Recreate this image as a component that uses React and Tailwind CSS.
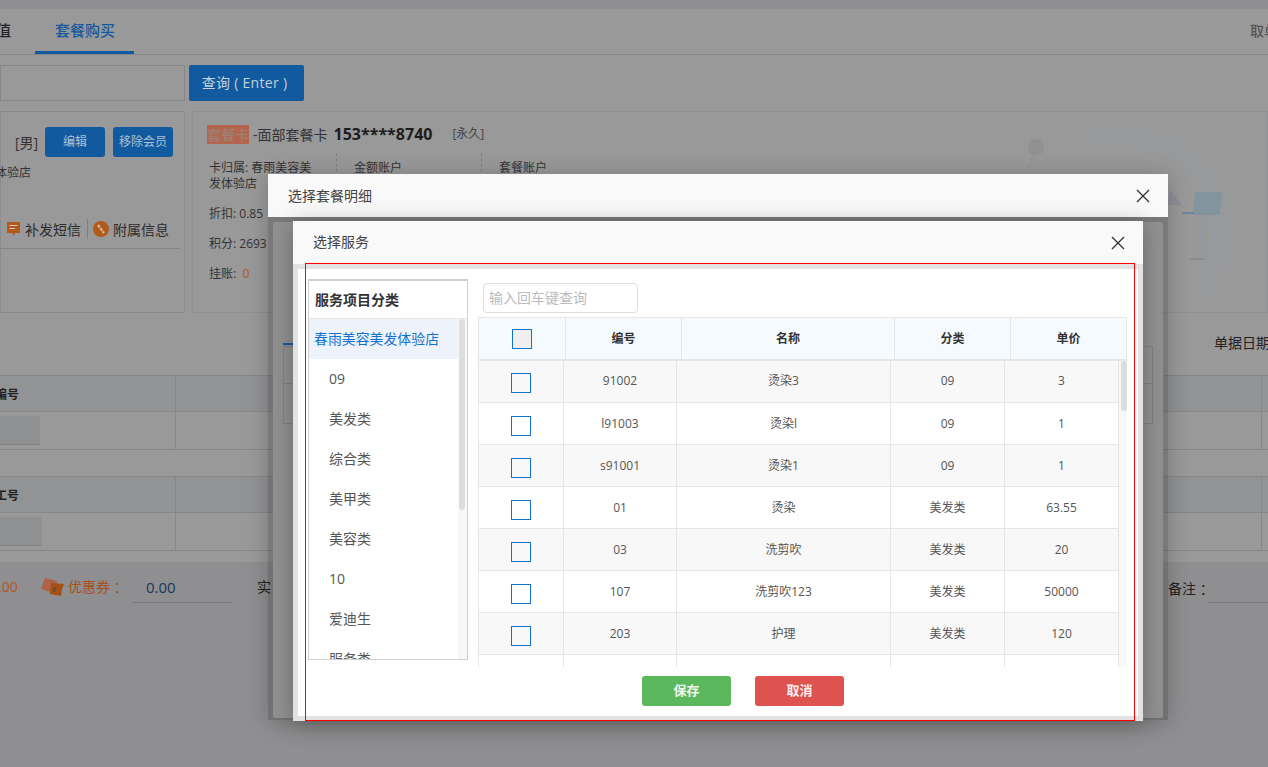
import React from "react";

const FONT = "font-['Open_Sans','Noto_Sans_CJK_SC',sans-serif]";

const cats = ["09", "美发类", "综合类", "美甲类", "美容类", "10", "爱迪生", "服务类"];
const rows = [
  ["91002", "烫染3", "09", "3"],
  ["l91003", "烫染l", "09", "1"],
  ["s91001", "烫染1", "09", "1"],
  ["01", "烫染", "美发类", "63.55"],
  ["03", "洗剪吹", "美发类", "20"],
  ["107", "洗剪吹123", "美发类", "50000"],
  ["203", "护理", "美发类", "120"],
  ["", "", "", ""],
];

function CloseX() {
  return (
    <svg width="14" height="14" viewBox="0 0 14 14" className="shrink-0">
      <path d="M1 1 L13 13 M13 1 L1 13" stroke="#333" strokeWidth="1.3" fill="none" />
    </svg>
  );
}

function Check({ className }) {
  return <span className={`block w-5 h-5 mx-auto border border-[#1272d3] ${className}`} />;
}

function Illustration() {
  return (
    <svg width="240" height="190" viewBox="0 0 240 190" className="absolute left-[1010px] top-[125px]">
      <path d="M70 14 C130 0 190 25 205 70 C218 110 208 145 185 175" fill="none" stroke="#939a9e" strokeWidth="24" opacity="0.22" />
      <circle cx="26" cy="22" r="8" fill="#909092" />
      <path d="M24 30 L10 60" stroke="#8b8c8e" strokeDasharray="2 2" fill="none" />
      <path d="M160 65 L172 80 L158 80 Z" fill="#8e8f96" />
      <path d="M185 67 L212 67 L210 90 L183 90 Z" fill="#82959f" />
      <path d="M172 88 L184 88" stroke="#5f7fa6" strokeWidth="1.5" />
      <path d="M190 90 V134" stroke="#8c9aa6" strokeWidth="1.5" fill="none" />
      <path d="M180 134 H201" stroke="#86898b" strokeWidth="1.5" fill="none" />
      <circle cx="208" cy="132" r="14" fill="#97999b" />
    </svg>
  );
}

function BgTable({ label, inputW }) {
  return (
    <div className="relative w-[1268px]">
      <div className="flex h-[37px] border-y border-[#868789] bg-[#929395]">
        <div className="w-[176px] border-r border-[#868789] text-[12px] font-bold leading-[38px] text-[#222] -indent-[5px]">{label}</div>
        <div className="flex-1" />
        <div className="w-[7px] border-l border-[#868789]" />
      </div>
      <div className="flex h-[38px] border-b border-[#868789]">
        <div className="w-[176px] border-r border-[#868789] pt-[4px]">
          <div className="h-[29px] bg-[#8f9092] border-b border-[#808183]" style={{ width: inputW }} />
        </div>
        <div className="flex-1" />
        <div className="w-[7px] border-l border-[#868789]" />
      </div>
    </div>
  );
}

export default function App() {
  return (
    <div className={`relative w-[1268px] h-[767px] overflow-hidden bg-[#99999a] text-[#2b2b2b] ${FONT}`}>
      {/* page behind the dialogs */}
      <div className="h-[9px] bg-[#8f8f91]" />
      <div className="flex h-[46px] items-stretch border-b border-[#858688]">
        <div className="w-[35px] text-[15px] font-medium leading-[42px] text-[#222]">
          <span className="block -ml-[4px]">值</span>
        </div>
        <div className="w-[99px] h-[45px] pl-[1px] border-b-[3px] border-[#125a9f] text-center text-[15px] font-medium leading-[42px] text-[#125a9f]">套餐购买</div>
        <div className="flex-1" />
        <div className="w-[18px] text-[14px] font-medium leading-[44px] text-[#555] whitespace-nowrap overflow-hidden">取单</div>
      </div>

      <div className="flex gap-[4px] h-[36px] mt-[10px]">
        <div className="w-[185px] border border-[#858688]" />
        <div className="w-[115px] pr-[4px] rounded-[2px] bg-[#125a9f] text-center text-[14px] tracking-[0.3px] leading-[36px] text-[#c4d0dc]">查询 ( Enter )</div>
      </div>

      <div className="flex gap-[7px] h-[202px] mt-[10px]">
        <div className="w-[185px] border border-[#8a8b8d] relative shrink-0">
          <div className="flex items-center h-[30px] mt-[15px] text-[14px]">
            <span className="ml-[14px] w-[30px] text-[#333]">[男]</span>
            <span className="w-[60px] h-[30px] rounded-[3px] bg-[#125a9f] text-center text-[12px] leading-[30px] text-[#aec2d6]">编辑</span>
            <span className="ml-[8px] w-[60px] h-[30px] rounded-[3px] bg-[#125a9f] text-center text-[12px] leading-[30px] text-[#aec2d6]">移除会员</span>
          </div>
          <div className="mt-[7px] -ml-[18px] text-[12px] leading-[18px] text-[#333]">发体验店</div>
          <div className="mt-[35px] flex items-center h-[24px] text-[14px] text-[#2b2b2b]">
            <svg width="15" height="16" viewBox="0 0 15 16" className="ml-[5px]">
              <path d="M1 1 H14 V12 H9 L7.5 14.5 L6 12 H1 Z" fill="#b25a1c" />
              <path d="M3.5 4.5 H11.5 M3.5 7.5 H9" stroke="#d9c6b8" strokeWidth="1.2" />
            </svg>
            <span className="ml-[4px]">补发短信</span>
            <span className="ml-[6px] w-px h-[20px] bg-[#7d7e80]" />
            <svg width="16" height="16" viewBox="0 0 16 16" className="ml-[5px]">
              <circle cx="8" cy="8" r="8" fill="#b25a1c" />
              <path d="M5 4 L11 12" stroke="#d6b8a4" strokeWidth="2.4" strokeDasharray="3 1" />
            </svg>
            <span className="ml-[4px]">附属信息</span>
          </div>
          <div className="mt-[7px] w-[179px] h-px bg-[#848587]" />
        </div>

        <div className="flex-1 border border-[#8b9298] relative pl-[14px]">
          <div className="flex items-center h-[20px] mt-[12px] whitespace-nowrap">
            <span className="w-[42px] h-[19px] bg-[#b3664f] text-center text-[14px] leading-[19px] text-[#9a8478]">套餐卡</span>
            <span className="ml-[4px] text-[14px] text-[#333]">-面部套餐卡</span>
            <span className="ml-[6px] text-[16px] font-bold text-[#1d1d1d]">153****8740</span>
            <span className="ml-[20px] text-[12px] text-[#444]">[永久]</span>
          </div>
          <div className="flex mt-[9px]">
            <div className="w-[129px] pl-[2px] pt-[7px] text-[12px] text-[#333]">
              <div className="w-[108px] leading-[16px]">卡归属: 春雨美容美发体验店</div>
              <div className="mt-[12px] leading-[20px]">折扣: 0.85</div>
              <div className="mt-[10px] leading-[20px]">积分: 2693</div>
              <div className="mt-[10px] leading-[20px]">挂账:&nbsp; <span className="text-[#b5531d]">0</span></div>
            </div>
            <div className="w-[145px] h-[40px] pt-[5px] border-l border-dashed border-[#7f8082] pl-[17px] text-[12px] leading-[20px] text-[#333]">金额账户</div>
            <div className="h-[40px] pt-[5px] border-l border-dashed border-[#7f8082] pl-[17px] text-[12px] leading-[20px] text-[#333]">套餐账户</div>
          </div>
        </div>
      </div>

      <div className="h-[249px] relative pt-[62px]">
        <BgTable label="编号" inputW={40} />
        <div className="h-[26px]" />
        <BgTable label="工号" inputW={42} />
        <div className="absolute left-[1214px] top-[19px] text-[14px] whitespace-nowrap text-[#222]">单据日期</div>
      </div>

      <div className="h-[205px] bg-[#8f8f91] flex items-start pt-[15px] text-[14px] leading-[20px] relative">
        <span className="-ml-[10px] w-[50px] text-[#b3551f]">0.00</span>
        <svg width="25" height="20" viewBox="0 0 25 20" className="shrink-0">
          <path d="M5 1 L17 4 L14 16 L1 12 Z" fill="#ad6249" />
          <path d="M11 6 L24 7 L22 12 L21 19 L10 17 Z" fill="#a84f12" />
          <path d="M13 10 h3 v5 h-3z" fill="#6f4f37" />
        </svg>
        <span className="ml-[3px] w-[64px] text-[#a8501c] whitespace-nowrap">优惠券 ：</span>
        <div className="w-[100px] h-[26px] border-b border-[#797a7c] pl-[14px] text-[15px] text-[#17365a]">0.00</div>
        <span className="ml-[25px] text-[#222]">实</span>
        <span className="absolute left-[1168px] top-[17px] text-[#222] whitespace-nowrap">备注 ：</span>
        <div className="absolute left-[1208px] top-[15px] w-[60px] h-[26px] border-b border-[#797a7c]" />
      </div>

      <Illustration />

      {/* outer dialog */}
      <div className="absolute left-[268px] top-[174px] w-[900px] h-[546px] bg-black/20 shadow-[0_2px_22px_rgba(0,0,0,0.22)]">
        <div className="flex items-center justify-between h-[43px] bg-[#f9f9f9] pl-[20px] pr-[18px] text-[14px] text-[#444]">
          <span>选择套餐明细</span>
          <CloseX />
        </div>
        <div className="h-[503px] px-[5px] pt-[5px] pb-[2px]">
          <div className="h-full rounded-[2px] bg-[#919192] pl-[10px] pt-[124px] relative">
            <div className="absolute left-[10px] top-[121px] w-[10px] h-[2px] bg-[#125a9f]" />
            <div className="w-[870px] h-[78px] border border-[#808183]">
              <div className="h-[37px] border-b border-[#808183]" />
            </div>
          </div>
        </div>
      </div>

      {/* inner dialog */}
      <div className="absolute left-[293px] top-[221px] w-[850px] h-[500px] bg-[#e2e2e2] shadow-[0_3px_22px_rgba(0,0,0,0.28)] flex flex-col">
        <div className="flex items-center justify-between h-[43px] bg-[#f9f9f9] pl-[20px] pr-[18px] text-[14px] text-[#444] shrink-0">
          <span className="-mt-[2px]">选择服务</span>
          <CloseX />
        </div>
        <div className="flex-1 px-[5px] pt-[5px] pb-[5px]">
          <div className="h-full bg-white">
            <div className="flex items-start pl-[10px] pt-[10px] h-[398px]">
              {/* category panel */}
              <div className="w-[160px] h-[381px] border border-t-2 border-[#cfcfcf] flex flex-col shrink-0">
                <div className="h-[38px] border-b border-[#e5e5e5] pl-[6px] text-[14px] font-bold leading-[37px] text-[#333]">服务项目分类</div>
                <div className="flex flex-1 min-h-0">
                  <div className="flex-1 overflow-hidden">
                    <div className="h-[40px] bg-[#eef3fb] pl-[5px] text-[13.9px] leading-[40px] text-[#1272d3] whitespace-nowrap">春雨美容美发体验店</div>
                    {cats.map((c) => (
                      <div key={c} className="h-[40px] pl-[20px] text-[14px] leading-[40px] text-[#555]">{c}</div>
                    ))}
                  </div>
                  <div className="w-[9px] bg-[#f8f8f8] shrink-0 px-[1px]">
                    <div className="w-[6px] h-[191px] rounded-[3px] bg-[#dcdddd]" />
                  </div>
                </div>
              </div>

              {/* table side */}
              <div className="ml-[10px] w-[649px]">
                <div className="ml-[5px] mt-[4px] w-[155px] h-[30px] rounded-[4px] border border-[#ddd] pl-[5px] text-[14px] leading-[28px] text-[#bbb]">输入回车键查询</div>
                <table className="mt-[4px] w-[648px] table-fixed border-collapse">
                  <colgroup>
                    <col className="w-[87px]" />
                    <col className="w-[116px]" />
                    <col className="w-[213px]" />
                    <col className="w-[116px]" />
                    <col className="w-[116px]" />
                  </colgroup>
                  <thead>
                    <tr className="h-[42px] bg-[#f5faff] text-[12px] font-bold text-[#333]">
                      <th className="border border-[#e6e6e6] border-b-2 p-0"><Check className="mt-[2px] bg-[#efefef]" /></th>
                      <th className="border border-[#e6e6e6] border-b-2 p-0 pt-[2px] font-bold">编号</th>
                      <th className="border border-[#e6e6e6] border-b-2 p-0 pt-[2px] font-bold">名称</th>
                      <th className="border border-[#e6e6e6] border-b-2 p-0 pt-[2px] font-bold">分类</th>
                      <th className="border border-[#e6e6e6] border-b-2 p-0 pt-[2px] font-bold">单价</th>
                    </tr>
                  </thead>
                </table>
                <div className="flex h-[306px] overflow-hidden">
                  <table className="w-[640px] h-fit table-fixed border-collapse shrink-0">
                    <colgroup>
                      <col className="w-[85px]" />
                      <col className="w-[113px]" />
                      <col className="w-[214px]" />
                      <col className="w-[114px]" />
                      <col className="w-[114px]" />
                    </colgroup>
                    <tbody>
                      {rows.map((r, i) => (
                        <tr key={i} className={`h-[42px] text-[12px] text-[#555] text-center ${i % 2 === 0 ? "bg-[#f8f8f8]" : "bg-white"}`}>
                          <td className="border border-[#e6e6e6] border-t-0 p-0"><Check className="mt-[4px]" /></td>
                          {r.map((v, j) => (
                            <td key={j} className="border border-[#e6e6e6] border-t-0 p-0">{v}</td>
                          ))}
                        </tr>
                      ))}
                    </tbody>
                  </table>
                  <div className="w-[9px] bg-[#f8f8f8] pl-[2px] shrink-0">
                    <div className="w-[6px] h-[50px] rounded-[3px] bg-[#dcdddd]" />
                  </div>
                </div>
              </div>
            </div>
            <div className="flex justify-start pl-[344px] gap-[24px] mt-[9px]">
              <button className="w-[89px] h-[30px] rounded-[3px] bg-[#5cb85c] text-center text-[13px] font-bold text-[#f0f7f0]">保存</button>
              <button className="w-[89px] h-[30px] rounded-[3px] bg-[#de5350] text-center text-[13px] font-bold text-[#fbeeee]">取消</button>
            </div>
          </div>
        </div>
        {/* red annotation frame */}
        <div className="absolute left-[12px] top-[42px] w-[830px] h-[458px] border border-[#f00] pointer-events-none" />
      </div>
    </div>
  );
}
